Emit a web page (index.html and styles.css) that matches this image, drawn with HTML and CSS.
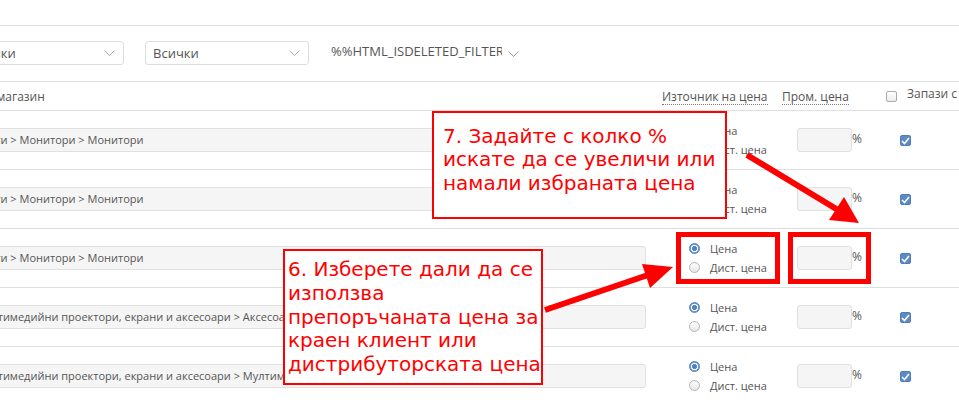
FILE: index.html
```html
<!DOCTYPE html>
<html lang="bg">
<head>
<meta charset="utf-8">
<title>Категории</title>
<link rel="stylesheet" href="styles.css">
</head>
<body>
<div class="page">
  <div class="topbar"></div>
  <div class="filters">
    <div class="select s1"><span class="sel-text">Всички</span><svg class="chev" width="11" height="7" viewBox="0 0 11 7"><polyline points="0.5,0.5 5.5,5.5 10.5,0.5" fill="none" stroke="#aaa" stroke-width="1"/></svg></div>
    <div class="select s2"><span class="sel-text">Всички</span><svg class="chev" width="11" height="7" viewBox="0 0 11 7"><polyline points="0.5,0.5 5.5,5.5 10.5,0.5" fill="none" stroke="#aaa" stroke-width="1"/></svg></div>
    <div class="select plain"><span class="sel-text clip">%%HTML_ISDELETED_FILTER</span><svg class="chev" width="11" height="7" viewBox="0 0 11 7"><polyline points="0.5,0.5 5.5,5.5 10.5,0.5" fill="none" stroke="#999" stroke-width="1"/></svg></div>
  </div>

  <div class="grid head">
    <div class="c-cat"><span>Категория в магазин</span></div>
    <div class="c-src"><span class="dotted">Източник на цена</span></div>
    <div class="c-pct"><span class="dotted">Пром. цена</span></div>
    <div class="c-save"><span class="cb off"></span><span class="save-label">Запази с</span></div>
  </div>

  <div class="grid row">
    <div class="c-cat"><div class="field">Други &gt; Монитори &gt; Монитори</div></div>
    <div class="c-src"><div class="radios"><label><span class="radio on"></span>Цена</label><label><span class="radio"></span>Дист. цена</label></div></div>
    <div class="c-pct"><div class="pct-input"></div><span class="pct">%</span></div>
    <div class="c-save"><span class="cb on"><svg width="9" height="8" viewBox="0 0 9 8"><polyline points="1,4 3.5,6.5 8,1" fill="none" stroke="#fff" stroke-width="1.6"/></svg></span></div>
  </div>

  <div class="grid row">
    <div class="c-cat"><div class="field">Други &gt; Монитори &gt; Монитори</div></div>
    <div class="c-src"><div class="radios"><label><span class="radio on"></span>Цена</label><label><span class="radio"></span>Дист. цена</label></div></div>
    <div class="c-pct"><div class="pct-input"></div><span class="pct">%</span></div>
    <div class="c-save"><span class="cb on"><svg width="9" height="8" viewBox="0 0 9 8"><polyline points="1,4 3.5,6.5 8,1" fill="none" stroke="#fff" stroke-width="1.6"/></svg></span></div>
  </div>

  <div class="grid row">
    <div class="c-cat"><div class="field">Други &gt; Монитори &gt; Монитори</div></div>
    <div class="c-src"><div class="radios"><label><span class="radio on"></span>Цена</label><label><span class="radio"></span>Дист. цена</label></div></div>
    <div class="c-pct"><div class="pct-input"></div><span class="pct">%</span></div>
    <div class="c-save"><span class="cb on"><svg width="9" height="8" viewBox="0 0 9 8"><polyline points="1,4 3.5,6.5 8,1" fill="none" stroke="#fff" stroke-width="1.6"/></svg></span></div>
  </div>

  <div class="grid row">
    <div class="c-cat"><div class="field">Мултимедийни проектори, екрани и аксесоари &gt; Аксесоари за проектори</div></div>
    <div class="c-src"><div class="radios"><label><span class="radio on"></span>Цена</label><label><span class="radio"></span>Дист. цена</label></div></div>
    <div class="c-pct"><div class="pct-input"></div><span class="pct">%</span></div>
    <div class="c-save"><span class="cb on"><svg width="9" height="8" viewBox="0 0 9 8"><polyline points="1,4 3.5,6.5 8,1" fill="none" stroke="#fff" stroke-width="1.6"/></svg></span></div>
  </div>

  <div class="grid row">
    <div class="c-cat"><div class="field">Мултимедийни проектори, екрани и аксесоари &gt; Мултимедийни проектори</div></div>
    <div class="c-src"><div class="radios"><label><span class="radio on"></span>Цена</label><label><span class="radio"></span>Дист. цена</label></div></div>
    <div class="c-pct"><div class="pct-input"></div><span class="pct">%</span></div>
    <div class="c-save"><span class="cb on"><svg width="9" height="8" viewBox="0 0 9 8"><polyline points="1,4 3.5,6.5 8,1" fill="none" stroke="#fff" stroke-width="1.6"/></svg></span></div>
  </div>

  <div class="hl hl-src"></div>
  <div class="hl hl-pct"></div>

  <div class="callout callout-7">7. Задайте с колко %<br>искате да се увеличи или<br>намали избраната цена</div>
  <div class="callout callout-6">6. Изберете дали да се<br>използва<br>препоръчаната цена за<br>краен клиент или<br>дистрибуторската цена</div>

  <svg class="arrows" width="959" height="402" viewBox="0 0 959 402">
    <line x1="545" y1="310" x2="648" y2="275" stroke="#ff0000" stroke-width="6"/>
    <polygon points="642,264 673,267 650,288" fill="#ff0000"/>
    <line x1="747" y1="155" x2="838" y2="210" stroke="#ff0000" stroke-width="6"/>
    <polygon points="844,197 859,223 829,220" fill="#ff0000"/>
  </svg>
</div>
</body>
</html>
```

FILE: styles.css
```css
html, body {
  margin: 0;
  padding: 0;
  background: #fff;
}

body {
  font-family: "Open Sans", "Liberation Sans", sans-serif;
  color: #555;
  overflow: hidden;
}

.page {
  position: relative;
  width: 959px;
  height: 402px;
  overflow: hidden;
}

.topbar {
  height: 25px;
  border-bottom: 1px solid #dedede;
}

.filters {
  display: flex;
  align-items: flex-start;
  height: 40px;
  padding-top: 15px;
  margin-left: -38px;
  width: 997px;
  border-bottom: 1px solid #dedede;
}

.select {
  box-sizing: border-box;
  height: 24px;
  border: 1px solid #ddd;
  border-radius: 3px;
  display: flex;
  align-items: center;
  justify-content: space-between;
  padding: 0 8px 0 7px;
  font-size: 13px;
  color: #555;
}

.s1 { width: 162px; }
.s2 { width: 164px; margin-left: 21px; }

.select.plain {
  border: none;
  width: 200px;
  margin-left: 14px;
  padding: 0 0 0 8px;
  font-size: 13px;
  justify-content: flex-start;
  margin-top: -2px;
}

.clip {
  display: block;
  width: 171px;
  overflow: hidden;
  white-space: nowrap;
}

.plain .chev { margin-left: 6px; margin-top: 6px; }

.grid {
  display: grid;
  grid-template-columns: 737px 120px 100px 84px;
  margin-left: -82px;
  width: 1041px;
  border-bottom: 1px solid #dedede;
}

.head {
  height: 28px;
  font-size: 12px;
  align-items: center;
}

.head .c-cat { padding-left: 5px; }
.head .c-src { padding-left: 7px; }
.head .c-pct { padding-left: 7px; }
.head .c-save {
  padding-left: 11px;
  display: flex;
  align-items: center;
  gap: 10px;
  white-space: nowrap;
}

.save-label { margin-top: -5px; }

.dotted {
  border-bottom: 1px dotted #777;
  line-height: 15px;
  display: inline-block;
}

.row {
  height: 58px;
  font-size: 11px;
}

.row .c-cat { padding-top: 17px; }

.field {
  box-sizing: border-box;
  height: 24px;
  margin-left: 52px;
  margin-right: 9px;
  background: #f5f5f5;
  border: 1px solid #e0e0e0;
  border-radius: 3px;
  padding: 0 8px 0 5px;
  line-height: 22px;
  white-space: nowrap;
  overflow: hidden;
}

.radios {
  padding: 10px 0 0 34px;
  display: flex;
  flex-direction: column;
}

.radios label {
  display: flex;
  align-items: center;
  height: 19px;
  gap: 10px;
}

.radio {
  box-sizing: border-box;
  width: 11px;
  height: 11px;
  border-radius: 50%;
  border: 1px solid #b5b5b5;
  background: linear-gradient(#fff, #e6e6e6);
}

.radio.on {
  border: 1px solid #4d7fbf;
  background: radial-gradient(circle, #4f84c4 0 2.2px, #fff 2.8px 3.4px, #6b9bd4 3.9px);
}

.row .c-pct {
  display: flex;
  align-items: flex-start;
  padding-left: 22px;
}

.pct-input {
  box-sizing: border-box;
  width: 55px;
  height: 24px;
  margin-top: 17px;
  background: #f5f5f5;
  border: 1px solid #e0e0e0;
  border-radius: 3px;
}

.pct {
  font-size: 12px;
  margin-top: 19px;
}

.row .c-save {
  padding-left: 25px;
  padding-top: 24px;
}

.cb {
  box-sizing: border-box;
  display: flex;
  align-items: center;
  justify-content: center;
  width: 11px;
  height: 11px;
  border-radius: 2px;
}

.cb.on {
  background: #5b8ac7;
  border: 1px solid #4f7db8;
}

.cb.off {
  border: 1px solid #aaa;
  background: linear-gradient(#fff, #ececec);
}

.hl {
  position: absolute;
  box-sizing: border-box;
  border: 5px solid #ff0000;
  top: 232px;
  height: 52px;
}

.hl-src { left: 676px; width: 104px; }
.hl-pct { left: 788px; width: 83px; }

.callout {
  position: absolute;
  box-sizing: border-box;
  background: #fff;
  border: 2px solid #ff0000;
  color: #ff0000;
  font-family: "DejaVu Sans", sans-serif;
  font-size: 20px;
  white-space: nowrap;
}

.callout-7 {
  left: 432px;
  top: 111px;
  width: 295px;
  height: 108px;
  padding: 12px 0 0 9px;
  line-height: 23.3px;
}

.callout-6 {
  left: 283px;
  top: 249px;
  width: 260px;
  height: 136px;
  padding: 7px 0 0 3px;
  line-height: 23.75px;
}

.arrows {
  position: absolute;
  left: 0;
  top: 0;
  pointer-events: none;
}
```
